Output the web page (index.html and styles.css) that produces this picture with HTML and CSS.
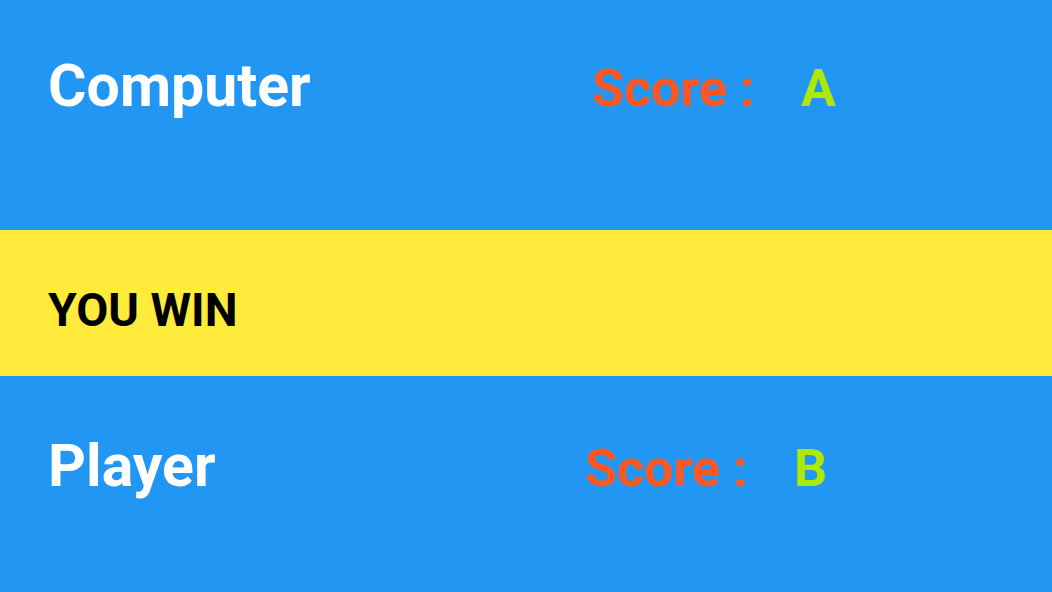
FILE: index.html
```html
<!DOCTYPE html>
<html lang="en">
<head>
<meta charset="utf-8">
<title>Score Board</title>
<link rel="stylesheet" href="styles.css">
</head>
<body>
<main class="board">
  <section class="panel panel-top">
    <div class="row">
      <span class="name">Computer</span>
      <span class="score score-top">
        <span class="score-label">Score :</span>
        <span class="score-value">A</span>
      </span>
    </div>
  </section>
  <section class="banner">
    <span class="result">YOU WIN</span>
  </section>
  <section class="panel panel-bottom">
    <div class="row">
      <span class="name">Player</span>
      <span class="score score-bottom">
        <span class="score-label">Score :</span>
        <span class="score-value">B</span>
      </span>
    </div>
  </section>
</main>
</body>
</html>
```

FILE: styles.css
```css
html, body {
  margin: 0;
  padding: 0;
}

body {
  background: #2196f3;
  font-family: Roboto, "Liberation Sans", sans-serif;
  font-weight: 700;
  width: 1052px;
  height: 592px;
  overflow: hidden;
}

.board {
  display: flex;
  flex-direction: column;
  height: 592px;
}

.panel {
  background: #2196f3;
}

.panel-top {
  height: 230px;
  box-sizing: border-box;
  padding-top: 56px;
}

.panel-bottom {
  height: 216px;
  box-sizing: border-box;
  padding-top: 60px;
}

.row {
  display: grid;
  grid-template-columns: 544px auto;
  align-items: baseline;
  padding-left: 48px;
}

.name {
  color: #ffffff;
  font-size: 59px;
  line-height: 1;
}

.score {
  display: flex;
  align-items: baseline;
  font-size: 52px;
  line-height: 1;
}

.score-bottom {
  margin-left: -7px;
}

.score-label {
  color: #ff5722;
  width: 209px;
}

.score-value {
  color: #aeea00;
}

.banner {
  height: 146px;
  background: #ffeb3b;
  display: flex;
  align-items: center;
  padding-left: 48px;
}

.result {
  color: #000000;
  font-size: 46.5px;
  line-height: 1;
  padding-top: 14px;
}
```
